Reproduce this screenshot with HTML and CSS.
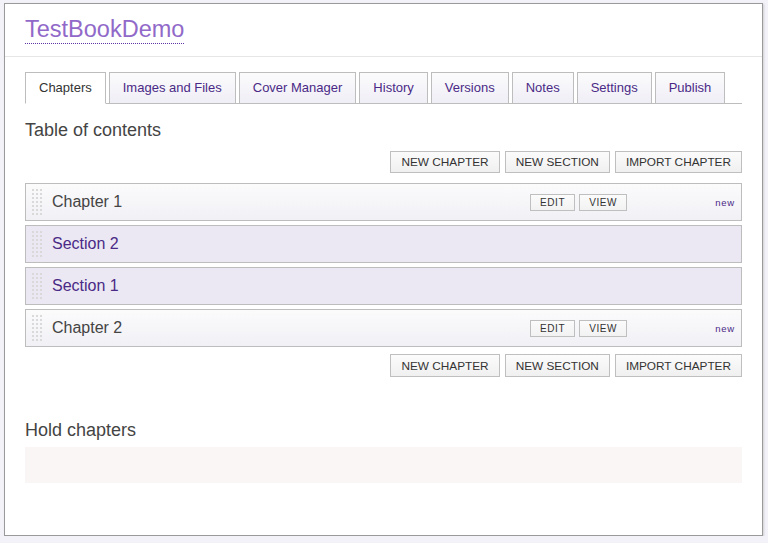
FILE: index.html
```html
<!DOCTYPE html>
<html>
<head>
<meta charset="utf-8">
<link rel="stylesheet" href="styles.css">
</head>
<body>
<div class="page">
  <header class="header">
    <a class="book-title">TestBookDemo</a>
  </header>
  <main class="main">
    <ul class="tabs">
      <li class="tab active">Chapters</li>
      <li class="tab">Images and Files</li>
      <li class="tab">Cover Manager</li>
      <li class="tab">History</li>
      <li class="tab">Versions</li>
      <li class="tab">Notes</li>
      <li class="tab">Settings</li>
      <li class="tab">Publish</li>
    </ul>

    <h2 class="heading">Table of contents</h2>
    <div class="toolbar">
      <button class="btn">NEW CHAPTER</button>
      <button class="btn">NEW SECTION</button>
      <button class="btn">IMPORT CHAPTER</button>
    </div>

    <div class="toc">
      <div class="row chapter">
        <span class="handle"></span>
        <span class="row-title">Chapter 1</span>
        <span class="actions"><button class="sbtn">EDIT</button><button class="sbtn">VIEW</button></span>
        <span class="status">new</span>
      </div>
      <div class="row section">
        <span class="handle"></span>
        <span class="row-title">Section 2</span>
      </div>
      <div class="row section">
        <span class="handle"></span>
        <span class="row-title">Section 1</span>
      </div>
      <div class="row chapter">
        <span class="handle"></span>
        <span class="row-title">Chapter 2</span>
        <span class="actions"><button class="sbtn">EDIT</button><button class="sbtn">VIEW</button></span>
        <span class="status">new</span>
      </div>
    </div>

    <div class="toolbar bottom">
      <button class="btn">NEW CHAPTER</button>
      <button class="btn">NEW SECTION</button>
      <button class="btn">IMPORT CHAPTER</button>
    </div>

    <h2 class="heading hold">Hold chapters</h2>
    <div class="hold-area"></div>
  </main>
</div>
</body>
</html>
```
FILE: styles.css
```css
* { box-sizing: border-box; }
html, body { margin: 0; padding: 0; }
body {
  background: #f3f2f8;
  font-family: "Liberation Sans", Arial, sans-serif;
  color: #333;
}
.page {
  margin: 3px 0 0 4px;
  width: 759px;
  height: 533px;
  background: #fff;
  border: 1px solid #9a9a9a;
  box-shadow: 1px 1px 2px rgba(0,0,0,0.15);
}
.header {
  padding: 11px 20px 12px;
  border-bottom: 1px solid #e6e6e6;
}
.book-title {
  display: inline-block;
  font-size: 23.5px;
  line-height: 28px;
  color: #9169c9;
  border-bottom: 1px dotted #5b35a6;
  text-decoration: none;
}
.main { padding: 0 20px; }
.tabs {
  list-style: none;
  margin: 15px 0 0;
  padding: 0;
  display: flex;
  justify-content: flex-start;
  gap: 3px;
  border-bottom: 1px solid #bdbdbd;
  height: 32px;
}
.tab {
  flex: 0 0 auto;
  height: 32px;
  margin-bottom: -1px;
  padding: 0 13px;
  border: 1px solid #bdbdbd;
  background: linear-gradient(#fbfbfc, #f0eef6);
  font-size: 13px;
  line-height: 30px;
  color: #4a2a86;
}
.tab.active {
  background: #fff;
  border-bottom-color: #fff;
  color: #333;
}
.heading {
  margin: 15px 0 0;
  font-size: 18px;
  line-height: 22px;
  font-weight: normal;
  color: #444;
}
.toolbar {
  display: flex;
  justify-content: flex-end;
  gap: 5px;
  margin-top: 10px;
}
.toolbar.bottom { margin-top: 7px; }
.btn {
  height: 22px;
  padding: 0 10px;
  border: 1px solid #bfbfbf;
  background: linear-gradient(#fbfbfb, #f0f0f0);
  font-family: "Liberation Sans", Arial, sans-serif;
  font-size: 11.8px;
  color: #333;
  border-radius: 0;
}
.toolbar.bottom .btn { height: 23px; }
.toc {
  margin-top: 10px;
  display: flex;
  flex-direction: column;
  gap: 4px;
}
.row {
  height: 38px;
  border: 1px solid #bdbdbd;
  display: flex;
  align-items: center;
  padding: 0 6px 0 5px;
}
.row.chapter { background: linear-gradient(#fbfbfc, #f1f0f5); }
.row.section { background: #ebe8f3; }
.handle {
  width: 12px;
  height: 28px;
  background-image: radial-gradient(circle, #d9d9d9 0.9px, transparent 1.1px);
  background-size: 4px 4px;
}
.row-title {
  flex: 1;
  margin-left: 9px;
  font-size: 16px;
  color: #444;
}
.row.section .row-title { color: #4a2a86; }
.actions { display: flex; gap: 4px; }
.sbtn {
  height: 17px;
  padding: 0 9px;
  border: 1px solid #bfbfbf;
  background: linear-gradient(#fbfbfb, #f2f2f2);
  font-family: "Liberation Sans", Arial, sans-serif;
  font-size: 10px;
  letter-spacing: 0.6px;
  color: #333;
  border-radius: 0;
}
.status {
  margin-left: 88px;
  font-size: 9.5px;
  letter-spacing: 0.8px;
  color: #4a2a86;
}
.heading.hold { margin-top: 42px; }
.hold-area {
  margin-top: 6px;
  height: 36px;
  background: #faf6f6;
}
```
